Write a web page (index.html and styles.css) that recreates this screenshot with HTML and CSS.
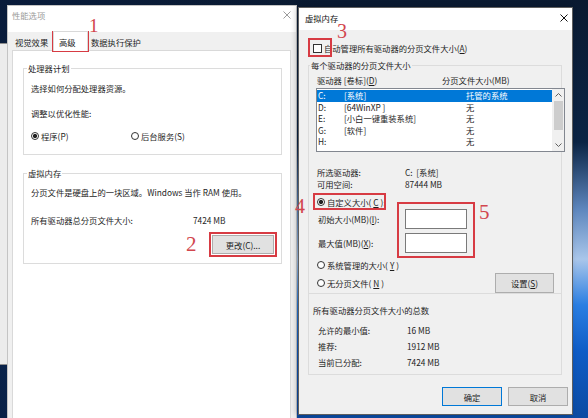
FILE: index.html
```html
<!DOCTYPE html>
<html lang="zh-CN">
<head>
  <meta charset="UTF-8">
  <meta name="viewport" content="width=device-width, initial-scale=1.0">
  <title>性能选项 - 虚拟内存</title>
  <link rel="stylesheet" href="styles.css">
</head>
<body>

<div class="desktop">

  <!-- Fenster dahinter (Systemeigenschaften) -->
  <div class="back-window"></div>

  <!-- Linkes Fenster: 性能选项 -->
  <div class="window perf-window">
    <div class="titlebar">
      <span>性能选项</span>
      <svg class="close" width="8" height="8" viewBox="0 0 8 8"><path d="M0.5 0.5L7.5 7.5M7.5 0.5L0.5 7.5" stroke="currentColor" stroke-width="1"/></svg>
    </div>
    <div class="perf-body">
      <div class="tabs">
        <span class="tab tab-first">视觉效果</span>
        <span class="tab tab-active">高级</span>
        <span class="tab">数据执行保护</span>
      </div>
      <div class="tab-panel">
        <fieldset class="group cpu-group">
          <legend>处理器计划</legend>
          <p>选择如何分配处理器资源。</p>
          <p class="tune-label">调整以优化性能:</p>
          <div class="radio-row">
            <span class="radio radio-on">程序(P)</span>
            <span class="radio">后台服务(S)</span>
          </div>
        </fieldset>

        <fieldset class="group mem-group">
          <legend>虚拟内存</legend>
          <p>分页文件是硬盘上的一块区域。Windows 当作 RAM 使用。</p>
          <div class="total-row">
            <span>所有驱动器总分页文件大小:</span>
            <span>7424 MB</span>
          </div>
          <div class="btn-row">
            <button class="btn btn-change">更改(C)...</button>
          </div>
        </fieldset>
      </div>
    </div>
  </div>

  <!-- Rechtes Fenster: 虚拟内存 -->
  <div class="window vm-window">
    <div class="titlebar">
      <span>虚拟内存</span>
      <svg class="close" width="8" height="8" viewBox="0 0 8 8"><path d="M0.5 0.5L7.5 7.5M7.5 0.5L0.5 7.5" stroke="currentColor" stroke-width="1"/></svg>
    </div>
    <div class="vm-body">
      <div class="check-row">
        <span class="checkbox"></span>
        <span>自动管理所有驱动器的分页文件大小(<u>A</u>)</span>
      </div>

      <fieldset class="group drive-group">
        <legend>每个驱动器的分页文件大小</legend>
        <div class="list-head">
          <span>驱动器 [卷标](<u>D</u>)</span>
          <span>分页文件大小(MB)</span>
        </div>
        <div class="listbox">
          <div class="rows">
            <div class="row row-selected"><span>C:</span><span>[系统]</span><span>托管的系统</span></div>
            <div class="row"><span>D:</span><span>[64WinXP ]</span><span>无</span></div>
            <div class="row"><span>E:</span><span>[小白一键重装系统]</span><span>无</span></div>
            <div class="row"><span>G:</span><span>[软件]</span><span>无</span></div>
            <div class="row"><span>H:</span><span></span><span>无</span></div>
          </div>
          <div class="scrollbar">
            <svg class="arrow" width="7" height="4" viewBox="0 0 7 4"><path d="M0.5 3.5L3.5 0.5L6.5 3.5" fill="none" stroke="#606060" stroke-width="1"/></svg>
            <div class="thumb"></div>
            <svg class="arrow arrow-down" width="7" height="4" viewBox="0 0 7 4"><path d="M0.5 0.5L3.5 3.5L6.5 0.5" fill="none" stroke="#606060" stroke-width="1"/></svg>
          </div>
        </div>

        <div class="kv drive-info">
          <span>所选驱动器:</span><span>C:&nbsp; [系统]</span>
        </div>
        <div class="kv">
          <span>可用空间:</span><span>87444 MB</span>
        </div>

        <span class="radio radio-on radio-custom">自定义大小(<u>C</u>):</span>
        <div class="size-row size-first">
          <span class="size-label">初始大小(MB)(<u>I</u>):</span>
          <span class="input"></span>
        </div>
        <div class="size-row size-second">
          <span class="size-label">最大值(MB)(<u>X</u>):</span>
          <span class="input"></span>
        </div>
        <span class="radio radio-system">系统管理的大小(<u>Y</u>)</span>
        <div class="last-row">
          <span class="radio">无分页文件(<u>N</u>)</span>
          <button class="btn btn-set">设置(<u>S</u>)</button>
        </div>
      </fieldset>

      <div class="total-group">
        <div>所有驱动器分页文件大小的总数</div>
        <div class="total-list">
          <div class="kv"><span>允许的最小值:</span><span>16 MB</span></div>
          <div class="kv"><span>推荐:</span><span>1912 MB</span></div>
          <div class="kv"><span>当前已分配:</span><span>7424 MB</span></div>
        </div>
      </div>

      <div class="dialog-buttons">
        <button class="btn btn-ok">确定</button>
        <button class="btn">取消</button>
      </div>
    </div>
  </div>

  <!-- Rote Markierungen -->
  <span class="mark-box mark-1"></span>
  <span class="mark-num num-1">1</span>
  <span class="mark-box mark-2"></span>
  <span class="mark-num num-2">2</span>
  <span class="mark-box mark-3"></span>
  <span class="mark-num num-3">3</span>
  <span class="mark-box mark-4"></span>
  <span class="mark-num num-4">4</span>
  <span class="mark-box mark-5"></span>
  <span class="mark-num num-5">5</span>

</div>

</body>
</html>
```

FILE: styles.css
```css
/* =====================
   Farben
   ===================== */
:root {
  --win-bg: #f0f0f0;
  --group-border: #dcdcdc;
  --text: #1e1e1e;
  --accent: #0078d7;
  --btn-bg: #e1e1e1;
  --btn-border: #adadad;
  --mark: #d73b43;
}

/* =====================
   Grundlayout / Desktop
   ===================== */
body {
  margin: 0;
  font-family: "Noto Sans CJK SC", "Noto Sans", sans-serif;
  font-size: 8.3px;
  line-height: 12px;
  color: var(--text);
  background: #0b1b33;
  text-autospace: no-autospace;
}

u {
  text-decoration: underline;
  text-underline-offset: 1px;
}

.desktop {
  position: relative;
  width: 588px;
  height: 418px;
  overflow: hidden;
  background:
    linear-gradient(to right, rgba(9, 28, 60, 0.9) 0, rgba(9, 28, 60, 0) 55%),
    linear-gradient(to bottom, #0a1a31 0, #0b2445 34%, #5d86bd 50%, #a9c6ea 62%, #2a7ee2 73%, #0f5cc6 84%, #0b4aa2 100%);
}

.back-window {
  position: absolute;
  left: -10px;
  top: 43px;
  width: 16px;
  height: 320px;
  background: #ececec;
  border: 1px solid #8f8f8f;
}

/* =====================
   Fenster
   ===================== */
.window {
  position: absolute;
  box-sizing: border-box;
  display: flex;
  flex-direction: column;
  background: var(--win-bg);
  border: 1px solid #8c8c8c;
}

.perf-window {
  left: 7px;
  top: 5px;
  width: 290px;
  height: 430px;
  border-color: #c4c4c4;
}

.vm-window {
  left: 298px;
  top: 7px;
  width: 275px;
  height: 408px;
  border-color: #5f5f5f;
  box-shadow: -2px 0 6px rgba(0, 0, 0, 0.2);
}

.titlebar {
  display: flex;
  justify-content: space-between;
  align-items: flex-start;
  box-sizing: border-box;
  flex-shrink: 0;
  background: #fff;
}

.close {
  margin-top: 2px;
}

.perf-window .titlebar {
  height: 26px;
  padding: 3px 5px 0 4px;
  color: #9b9b9b;
}

.vm-window .titlebar {
  height: 22px;
  padding: 4px 4px 0 6px;
  color: #111;
}

/* =====================
   Gemeinsame Elemente
   ===================== */
p {
  margin: 0;
}

.group {
  margin: 0;
  min-width: 0;
  border: 1px solid var(--group-border);
}

.group legend {
  padding: 0 1px;
  line-height: 12px;
}

.radio {
  display: flex;
  align-items: center;
  gap: 2px;
}

.radio::before {
  content: "";
  width: 8px;
  height: 8px;
  box-sizing: border-box;
  border: 1px solid #333;
  border-radius: 50%;
  background: #fff;
}

.radio-on::before {
  background: radial-gradient(circle, #222 0 1.8px, #fff 2.4px);
}

.btn {
  box-sizing: border-box;
  padding: 0;
  font: inherit;
  color: var(--text);
  background: var(--btn-bg);
  border: 1px solid var(--btn-border);
}

.kv {
  display: flex;
}

/* =====================
   性能选项
   ===================== */
.perf-body {
  flex: 1;
  display: flex;
  flex-direction: column;
  padding: 0 5px 0 4px;
}

.tabs {
  display: flex;
  height: 18px;
}

.tab {
  box-sizing: border-box;
  padding: 4px 0 0 3px;
  line-height: 12px;
}

.tab-first {
  width: 41px;
}

.tab-active {
  position: relative;
  z-index: 1;
  width: 35px;
  height: 20px;
  margin-top: -1px;
  padding-left: 5px;
  background: #fff;
  border: 1px solid #d9d9d9;
  border-bottom: none;
}

.tab-panel {
  flex: 1;
  background: #fff;
  border: 1px solid #d9d9d9;
}

.cpu-group {
  margin: 11px 8px 0 10px;
  padding: 8px 7px 12px 7px;
}

.cpu-group legend,
.mem-group legend {
  margin-left: -4px;
}

.tune-label {
  margin-top: 13px;
}

.radio-row {
  display: flex;
  margin-top: 11px;
}

.radio-row .radio:first-child {
  width: 100px;
}

.mem-group {
  margin: 12px 8px 0 10px;
  padding: 7px 7px 9px 7px;
}

.total-row {
  display: flex;
  margin-top: 16px;
}

.total-row span:first-child {
  width: 162px;
}

.btn-row {
  display: flex;
  justify-content: flex-end;
  margin-top: 9px;
}

.btn-change {
  width: 62px;
  height: 19px;
}

/* =====================
   虚拟内存
   ===================== */
.vm-body {
  flex: 1;
  display: flex;
  flex-direction: column;
  padding: 0 4px 0 9px;
}

.check-row {
  display: flex;
  align-items: center;
  gap: 2px;
  margin: 12px 0 0 5px;
}

.checkbox {
  width: 9px;
  height: 9px;
  box-sizing: border-box;
  border: 1px solid #333;
  background: #fff;
}

.drive-group {
  margin: 5px 6px 0 0;
  padding: 3px 0 0 8px;
}

.drive-group legend {
  margin-left: -7px;
}

.list-head {
  display: flex;
}

.list-head span:first-child {
  width: 125px;
}

.listbox {
  display: flex;
  box-sizing: border-box;
  width: 249px;
  height: 64px;
  margin: 2px 0 0 -1px;
  background: #fff;
  border: 1px solid #828790;
}

.rows {
  flex: 1;
  padding-top: 1px;
}

.row {
  display: flex;
  height: 11.5px;
  padding-left: 1px;
  line-height: 11.5px;
}

.row span:nth-child(1) {
  width: 26px;
}

.row span:nth-child(2) {
  width: 122px;
}

.row-selected {
  background: var(--accent);
  color: #fff;
}

.scrollbar {
  display: flex;
  flex-direction: column;
  align-items: center;
  width: 12px;
  background: #f0f0f0;
}

.arrow {
  margin-top: 4px;
}

.thumb {
  width: 9px;
  height: 29px;
  margin-top: 4px;
  background: #cdcdcd;
}

.arrow-down {
  margin-top: auto;
  margin-bottom: 4px;
}

.kv span:first-child {
  width: 88px;
}

.drive-info {
  margin-top: 14px;
}

.radio-custom {
  margin-top: 6px;
}

.size-row {
  display: flex;
  align-items: center;
  height: 20px;
}

.size-first {
  margin-top: 1px;
}

.size-second {
  margin-top: 4px;
}

.size-label {
  width: 87px;
  padding-left: 1px;
}

.input {
  box-sizing: border-box;
  width: 62px;
  height: 20px;
  background: #fff;
  border: 1px solid #7a7a7a;
}

.radio-system {
  margin-top: 6px;
}

.last-row {
  display: flex;
  align-items: center;
  justify-content: space-between;
  height: 20px;
  margin-top: 2px;
  padding-right: 7px;
}

.btn-set {
  width: 59px;
  height: 20px;
}

.total-group {
  margin-right: 6px;
  padding: 10px 0 4px 4px;
  border: 1px solid var(--group-border);
  border-top: none;
}

.total-list {
  margin-top: 6px;
  padding-left: 5px;
}

.total-list .kv {
  height: 16px;
  line-height: 16px;
}

.total-list .kv span:first-child {
  width: 89px;
}

.dialog-buttons {
  display: flex;
  justify-content: flex-end;
  gap: 6px;
  margin-top: 12px;
}

.dialog-buttons .btn {
  width: 60px;
  height: 19px;
}

.btn-ok {
  border-color: var(--accent);
}

/* =====================
   Rote Markierungen
   ===================== */
.mark-box {
  position: absolute;
  box-sizing: border-box;
  border: 2px solid var(--mark);
}

.mark-num {
  position: absolute;
  font-family: "Liberation Serif", serif;
  font-size: 21px;
  line-height: 14px;
  color: #d2464e;
}

.mark-1 { left: 52px; top: 31px; width: 37px; height: 21px; }
.num-1 { left: 89px; top: 19px; font-size: 19px; line-height: 13px; }
.mark-2 { left: 209px; top: 232px; width: 68px; height: 25px; }
.num-2 { left: 186px; top: 237px; }
.mark-3 { left: 308px; top: 38px; width: 24px; height: 19px; }
.num-3 { left: 337px; top: 24px; font-size: 20px; }
.mark-4 { left: 313px; top: 193px; width: 73px; height: 17px; }
.num-4 { left: 295px; top: 200px; font-size: 20px; line-height: 13px; }
.mark-5 { left: 397px; top: 202px; width: 78px; height: 56px; }
.num-5 { left: 479px; top: 205px; }
```
